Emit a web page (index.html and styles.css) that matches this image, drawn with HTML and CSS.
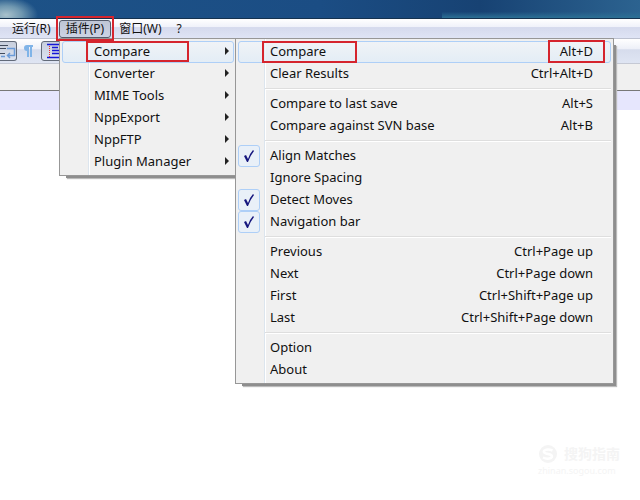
FILE: index.html
```html
<!DOCTYPE html>
<html lang="zh-CN">
<head>
<meta charset="utf-8">
<title>Notepad++</title>
<link rel="stylesheet" href="styles.css">
</head>
<body>
<header class="titlebar"></header>
<nav class="menubar">
  <button class="menubar-item" type="button">运行(R)</button>
  <button class="menubar-item is-open marked" type="button">插件(P)</button>
  <button class="menubar-item" type="button">窗口(W)</button>
  <button class="menubar-item" type="button">?</button>
</nav>
<div class="toolbar">
  <button class="tool tool-pressed tool-wrap" type="button" aria-label="Word wrap">
    <svg width="16" height="16" viewBox="0 0 16 16" fill="none">
      <path d="M0 2.5H8M0 5.5H6M0 10.5H5" stroke="#414b5d"/>
      <path d="M7 5.5H14.5V12.5H8M10 10L7.5 12.5L10 15M1 13.5H5" stroke="#6b9bd8" stroke-width="1.5"/>
    </svg>
  </button>
  <button class="tool" type="button" aria-label="Show all characters">
    <svg width="10" height="14" viewBox="0 0 10 14">
      <path d="M3 1H9V3H8V13H6V3H5V13H3V7Q0 7 0 4T3 1Z" fill="#80b4e8"/>
    </svg>
  </button>
  <button class="tool tool-pressed tool-guide" type="button" aria-label="Indent guide">
    <svg width="18" height="16" viewBox="0 0 18 16" fill="none">
      <path d="M1 1.5H18M6 4.5H12M6 7.5H18M6 10.5H14M1 14.5H16" stroke="#1618d8" stroke-width="1.5"/>
      <path d="M3.5 3V14" stroke="#e33" stroke-dasharray="1 1"/>
    </svg>
  </button>
</div>
<div class="panel"></div>
<div class="tabstrip"></div>
<main class="editor">
  <div class="watermark">
    <svg class="watermark-logo" width="20" height="20" viewBox="0 0 20 20" fill="none">
      <circle cx="10" cy="10" r="9" fill="#f4f4f4"/>
      <path d="M14.5 6.5Q10 4.5 6.5 6.5Q4.5 8.5 8 9.5L12 10.5Q15.5 12 13 14Q9 15.5 5 13.5" stroke="#fff" stroke-width="2.5"/>
    </svg>
    <span class="watermark-name">搜狗指南</span>
    <span class="watermark-site">zhinan.sogou.com</span>
  </div>
</main>

<div class="menu menu-plugins" role="menu">
  <button class="item is-hot" type="button"><span class="label marked">Compare</span><i class="arrow"></i></button>
  <button class="item" type="button"><span class="label">Converter</span><i class="arrow"></i></button>
  <button class="item" type="button"><span class="label">MIME Tools</span><i class="arrow"></i></button>
  <button class="item" type="button"><span class="label">NppExport</span><i class="arrow"></i></button>
  <button class="item" type="button"><span class="label">NppFTP</span><i class="arrow"></i></button>
  <button class="item" type="button"><span class="label">Plugin Manager</span><i class="arrow"></i></button>
</div>

<div class="menu menu-compare" role="menu">
  <button class="item is-hot" type="button"><span class="label marked">Compare</span><span class="key marked">Alt+D</span></button>
  <button class="item" type="button"><span class="label">Clear Results</span><span class="key">Ctrl+Alt+D</span></button>
  <hr>
  <button class="item" type="button"><span class="label">Compare to last save</span><span class="key">Alt+S</span></button>
  <button class="item" type="button"><span class="label">Compare against SVN base</span><span class="key">Alt+B</span></button>
  <hr>
  <label class="item"><input class="check" type="checkbox" checked><svg class="tick" width="10" height="12" viewBox="0 0 10 12"><path d="M0 6L2 5L4 9Q6 3 9 0L10 1Q6 6 4 12H3Z" fill="#16167e"/></svg><span class="label">Align Matches</span></label>
  <label class="item"><input class="check" type="checkbox"><svg class="tick" width="10" height="12" viewBox="0 0 10 12"><path d="M0 6L2 5L4 9Q6 3 9 0L10 1Q6 6 4 12H3Z" fill="#16167e"/></svg><span class="label">Ignore Spacing</span></label>
  <label class="item"><input class="check" type="checkbox" checked><svg class="tick" width="10" height="12" viewBox="0 0 10 12"><path d="M0 6L2 5L4 9Q6 3 9 0L10 1Q6 6 4 12H3Z" fill="#16167e"/></svg><span class="label">Detect Moves</span></label>
  <label class="item"><input class="check" type="checkbox" checked><svg class="tick" width="10" height="12" viewBox="0 0 10 12"><path d="M0 6L2 5L4 9Q6 3 9 0L10 1Q6 6 4 12H3Z" fill="#16167e"/></svg><span class="label">Navigation bar</span></label>
  <hr>
  <button class="item" type="button"><span class="label">Previous</span><span class="key">Ctrl+Page up</span></button>
  <button class="item" type="button"><span class="label">Next</span><span class="key">Ctrl+Page down</span></button>
  <button class="item" type="button"><span class="label">First</span><span class="key">Ctrl+Shift+Page up</span></button>
  <button class="item" type="button"><span class="label">Last</span><span class="key">Ctrl+Shift+Page down</span></button>
  <hr>
  <button class="item" type="button"><span class="label">Option</span></button>
  <button class="item" type="button"><span class="label">About</span></button>
</div>
</body>
</html>
```

FILE: styles.css
```css
* { box-sizing: border-box; }

body {
  margin: 0;
  min-height: 100vh;
  display: flex;
  flex-direction: column;
  position: relative;
  background: #fff;
  color: #111;
  font: 13px/18px "Noto Sans", "Noto Sans CJK SC", sans-serif;
}

button {
  margin: 0;
  padding: 0;
  border: 0;
  background: none;
  color: inherit;
  font: inherit;
  text-align: left;
}

.titlebar {
  height: 19px;
  border-bottom: 1px solid #15324f;
  background:
    radial-gradient(ellipse 32px 18px at 6px 15px, #a9c2cc 0, #6f97b0 50%, transparent 100%),
    linear-gradient(to bottom, transparent 65%, #2c7095 100%) right / 31% 100% no-repeat,
    linear-gradient(to right, #1d5287, #1b4d84 50%, #174273 75%, #2c6390);
}

/* Menu bar */
.menubar {
  height: 20px;
  display: flex;
  align-items: stretch;
  gap: 8px;
  padding: 1px 0 0 12px;
  background: linear-gradient(to bottom, #fff 0, #f0f2fa 40%, #d5daed 45%, #dfe4f5 100%);
  border-bottom: 1px solid #bcc1d0;
  font-size: 12px;
}
.menubar-item { white-space: nowrap; }
.menubar-item:last-child { margin-left: 7px; }
.menubar-item.is-open {
  padding: 0 6px;
  border: 1px solid #535b6b;
  border-radius: 3px;
  background: linear-gradient(to bottom, #bfc6d5, #ccd3e4);
  line-height: 16px;
}

/* Red callout frames */
.marked { position: relative; }
.marked::after {
  content: "";
  position: absolute;
  border: 2px solid #d5242d;
}
.menubar .marked { z-index: 1; }
.menubar .marked::after { inset: -5px -4px -4px; }
.label.marked::after { inset: -1px -39px -2px -8px; }
.menu-compare .label.marked::after { inset: -1px -31px -3px -8px; }
.key.marked::after { inset: -2px -12px -3px -12px; }

/* Toolbar and document area */
.toolbar {
  height: 25px;
  display: flex;
  align-items: center;
  gap: 7px;
  background: linear-gradient(to bottom, #fff 0, #eef0f8 40%, #d6dcec 45%, #dfe5f3 100%);
  border-bottom: 1px solid #c5c9d4;
}
.tool { display: flex; align-items: center; }
.tool-pressed {
  height: 20px;
  border: 1px solid #626a79;
  border-radius: 3px;
  background: linear-gradient(to bottom, #c8cfdd, #dbe2f0);
}
.tool-wrap { width: 17px; border-left: 0; border-radius: 0 3px 3px 0; }
.tool-guide { padding: 0 4px; }
.panel {
  height: 27px;
  background: #f0f0f0;
  border-bottom: 1px solid #777;
}
.tabstrip { height: 19px; background: #e6e6fd; }
.editor {
  flex: 1;
  display: flex;
  align-items: flex-end;
  justify-content: flex-end;
  padding: 0 20px 22px;
}
.watermark {
  display: grid;
  grid-template-columns: 20px auto;
  column-gap: 6px;
  align-items: center;
  color: #f4f4f4;
}
.watermark-name { font-size: 14px; line-height: 20px; font-weight: 700; }
.watermark-site { grid-column: 1 / -1; font-size: 9px; line-height: 14px; }

/* Pop-up menus */
.menu {
  position: absolute;
  top: 38px;
  display: flex;
  flex-direction: column;
  padding: 2px;
  border: 1px solid #979797;
  background:
    linear-gradient(to right, #dce5ee 1px, #fff 1px) 28px 0 / 2px 100% no-repeat,
    #f0f0f0;
}
.menu::before {
  content: "";
  position: absolute;
  inset: 6px -3px -3px 6px;
  border: solid #8e8e8e;
  border-width: 0 2px 2px 0;
  box-shadow: 1px 1px 1px #bbb;
}
.menu-plugins { left: 59px; width: 178px; }
.menu-compare { left: 235px; width: 379px; }

.item {
  height: 22px;
  display: flex;
  align-items: center;
  padding: 0 17px 2px 31px;
  border: 1px solid transparent;
  border-radius: 3px;
  position: relative;
}
.item.is-hot {
  border-color: #aecff7;
  background: linear-gradient(to bottom, rgba(240, 244, 249, .7), rgba(224, 236, 247, .8));
}
.label, .key { white-space: nowrap; }
.key { margin-left: auto; }

.menu-plugins .item { padding-right: 4px; }
.arrow {
  margin-left: auto;
  border: 4px solid transparent;
  border-left-color: #222;
  border-right-width: 0;
}

.check {
  appearance: none;
  position: absolute;
  left: -1px;
  top: -1px;
  width: 22px;
  height: 22px;
  margin: 0;
  border-radius: 3px;
}
.check:checked { border: 1px solid #aecff7; background: #e9f0f8; }
.tick { position: absolute; left: 5px; top: 4px; visibility: hidden; }
.check:checked + .tick { visibility: visible; }

hr {
  width: auto;
  height: 2px;
  margin: 3px 0 3px 27px;
  border: 0;
  border-top: 1px solid #dedede;
  border-bottom: 1px solid #fff;
}
```
